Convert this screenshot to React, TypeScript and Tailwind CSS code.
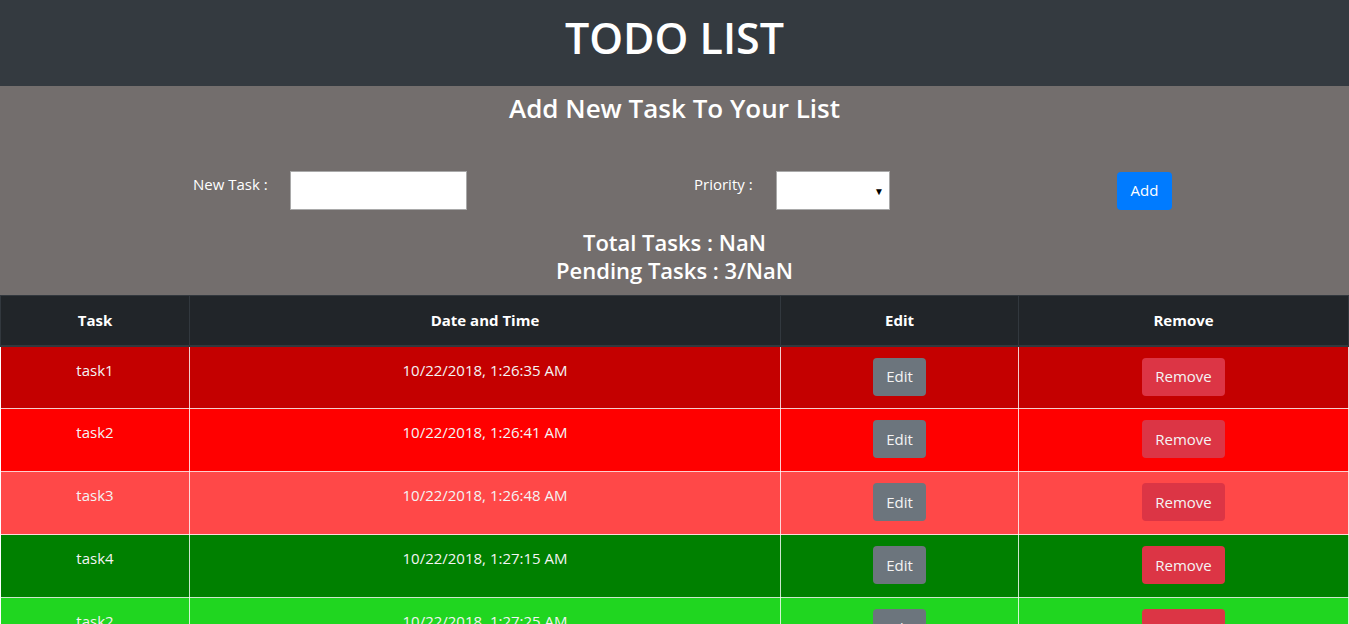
import React from "react";

type Task = { name: string; date: string; bg: string };

const tasks: Task[] = [
  { name: "task1", date: "10/22/2018, 1:26:35 AM", bg: "bg-[#c40000]" },
  { name: "task2", date: "10/22/2018, 1:26:41 AM", bg: "bg-[#ff0000]" },
  { name: "task3", date: "10/22/2018, 1:26:48 AM", bg: "bg-[#ff4848]" },
  { name: "task4", date: "10/22/2018, 1:27:15 AM", bg: "bg-[#008000]" },
  { name: "task2", date: "10/22/2018, 1:27:25 AM", bg: "bg-[#20d620]" },
];

const App: React.FC = () => {
  return (
    <div className="min-h-screen bg-white font-['Open_Sans',sans-serif] text-white">
      {/* Header */}
      <div className="h-[86px] bg-[#343a40] flex items-center justify-center pb-[12px]">
        <h1 className="text-[43px] font-semibold leading-none">TODO LIST</h1>
      </div>

      {/* Add task panel */}
      <div className="bg-[#736e6d] h-[209px] flex flex-col items-center pt-[6px]">
        <h2 className="text-[26px] font-semibold leading-[32px]">Add New Task To Your List</h2>

        <div className="w-full flex items-center mt-[47px] h-[39px] text-[15px]">
          <span className="ml-[193px] -mt-[12px] w-[97px]">New Task :</span>
          <input className="w-[177px] h-[39px] bg-white border border-[#a9a9a9] text-black outline-none" />
          <span className="ml-[227px] -mt-[12px] w-[82px]">Priority :</span>
          <div className="relative w-[114px] h-[39px] bg-white border border-[#a9a9a9]">
            <span className="absolute right-[5px] top-[14px] text-[10px] text-black leading-none">▼</span>
          </div>
          <button className="ml-[227px] w-[55px] h-[38px] bg-[#007bff] rounded-[4px] text-[15px]">Add</button>
        </div>

        <div className="mt-[18px] text-[22px] font-semibold leading-[28px] text-center">
          <div>Total Tasks : NaN</div>
          <div>Pending Tasks : 3/NaN</div>
        </div>
      </div>

      {/* Task table */}
      <table className="w-full border-collapse text-[15px]">
        <thead>
          <tr className="bg-[#212529] h-[50px]">
            <th className="w-[189px] border border-[#32383e] border-b-2 font-bold">Task</th>
            <th className="w-[591px] border border-[#32383e] border-b-2 font-bold">Date and Time</th>
            <th className="w-[238px] border border-[#32383e] border-b-2 font-bold">Edit</th>
            <th className="border border-[#32383e] border-b-2 font-bold">Remove</th>
          </tr>
        </thead>
        <tbody>
          {tasks.map((t, i) => (
            <tr key={i} className={`${t.bg} h-[63px]`}>
              <td className="border border-white/80 align-top text-center pt-[12px] text-[#f4f4f4]">{t.name}</td>
              <td className="border border-white/80 align-top text-center pt-[12px] text-[#f4f4f4]">{t.date}</td>
              <td className="border border-white/80 align-top text-center pt-[11px]">
                <button className="w-[53px] h-[38px] rounded-[4px] bg-[#6c757d] text-[15px] text-[#f4f4f4]">Edit</button>
              </td>
              <td className="border border-white/80 align-top text-center pt-[11px]">
                <button className="w-[83px] h-[38px] rounded-[4px] bg-[#dc3545] text-[15px] text-[#f4f4f4]">Remove</button>
              </td>
            </tr>
          ))}
        </tbody>
      </table>
    </div>
  );
};

export default App;
